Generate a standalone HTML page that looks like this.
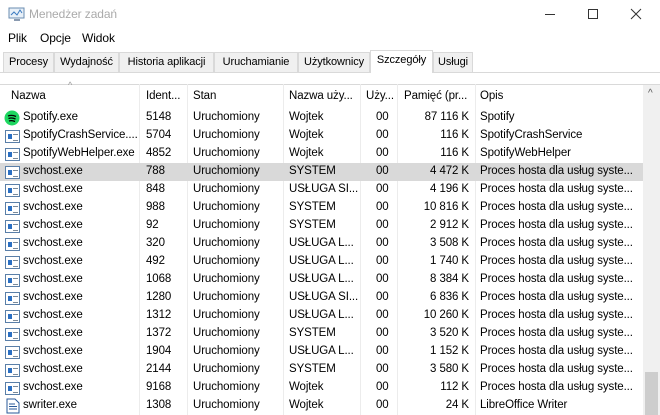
<!DOCTYPE html>
<html><head><meta charset="utf-8"><style>
*{margin:0;padding:0;box-sizing:border-box}
body{width:660px;height:415px;overflow:hidden;background:#fff;font-family:"Liberation Sans","DejaVu Sans",sans-serif;font-size:11.5px;color:#000;position:relative;letter-spacing:-0.1px}
.a{position:absolute;white-space:nowrap}
.tab{position:absolute;top:52px;height:20px;background:#f0f0f0;border:1px solid #d9d9d9;border-bottom:none;padding:3px 0 0 0;text-align:center;font-size:11px;overflow:hidden;white-space:nowrap}
.row{position:absolute;left:0;width:643px;height:18px}
.row span{position:absolute;top:2px;white-space:nowrap}
.sep{position:absolute;top:84px;width:1px;height:331px;background:#ececec}
.ic{position:absolute;left:5px;top:3px;width:15px;height:13px;border:1px solid #5a7fa8;background:#fff}
.ic:before{content:"";position:absolute;left:2px;top:3px;width:4px;height:5px;background:#2b6fc2}
.ic:after{content:"";position:absolute;left:7px;top:3px;width:5px;height:5px;border-top:1px solid #7a8a9a;border-bottom:1px solid #7a8a9a}
</style></head><body>
<svg class="a" style="left:8px;top:7px" width="18" height="16" viewBox="0 0 18 16"><rect x="1" y="1" width="15" height="10" fill="#e8f0f8" stroke="#6a8cb0"/><polyline points="3,8 6,5 9,8 12,3 14,6" fill="none" stroke="#3a7ac0"/><rect x="6" y="12" width="6" height="2" fill="#8a9ab0"/></svg>
<div class="a" style="left:29px;top:7px;color:#aaa;font-size:12px">Menedżer zadań</div>
<div class="a" style="left:545px;top:14px;width:10px;height:1px;background:#333"></div>
<div class="a" style="left:588px;top:9px;width:10px;height:10px;border:1px solid #333"></div>
<svg class="a" style="left:630px;top:8px" width="12" height="12"><path d="M1 1L11 11M11 1L1 11" stroke="#333" stroke-width="1"/></svg>
<div class="a" style="left:8px;top:31px;font-size:12px">Plik</div>
<div class="a" style="left:40px;top:31px;font-size:12px">Opcje</div>
<div class="a" style="left:82px;top:31px;font-size:12px">Widok</div>
<div class="a" style="left:0;top:72px;width:660px;height:1px;background:#d9d9d9"></div>
<div class="tab" style="left:3px;width:51px">Procesy</div>
<div class="tab" style="left:54px;width:65px">Wydajność</div>
<div class="tab" style="left:119px;width:95px">Historia aplikacji</div>
<div class="tab" style="left:214px;width:84px">Uruchamianie</div>
<div class="tab" style="left:298px;width:72px">Użytkownicy</div>
<div class="tab" style="left:370px;width:63px;top:50px;height:23px;background:#fff">Szczegóły</div>
<div class="tab" style="left:433px;width:40px">Usługi</div>
<div class="a" style="left:0;top:84px;width:660px;height:1px;background:#d9d9d9"></div>
<div class="a" style="left:68px;top:80px;color:#999;font-size:9px">^</div>
<div class="sep" style="left:139px"></div><div class="sep" style="left:187px"></div><div class="sep" style="left:283px"></div><div class="sep" style="left:360px"></div><div class="sep" style="left:397px"></div><div class="sep" style="left:475px"></div>
<div class="a" style="left:11px;top:90px">Nazwa</div>
<div class="a" style="left:146px;top:90px">Ident...</div>
<div class="a" style="left:193px;top:90px">Stan</div>
<div class="a" style="left:289px;top:90px">Nazwa uży...</div>
<div class="a" style="left:366px;top:90px">Uży...</div>
<div class="a" style="left:404px;top:90px">Pamięć (pr...</div>
<div class="a" style="left:480px;top:90px">Opis</div>
<div class="a" style="left:643px;top:85px;width:17px;height:330px;background:#f0f0f0"></div>
<div class="a" style="left:645px;top:372px;width:13px;height:43px;background:#cdcdcd"></div>
<div class="a" style="left:648px;top:88px;color:#555;font-size:10px">^</div>
<div id="rows"></div>
<script>
var d=[["Spotify.exe","5148","Wojtek","87 116 K","Spotify","sp"],
["SpotifyCrashService....","5704","Wojtek","116 K","SpotifyCrashService"],
["SpotifyWebHelper.exe","4852","Wojtek","116 K","SpotifyWebHelper"],
["svchost.exe","788","SYSTEM","4 472 K","h"],
["svchost.exe","848","USŁUGA SI...","4 196 K","h"],
["svchost.exe","988","SYSTEM","10 816 K","h"],
["svchost.exe","92","SYSTEM","2 912 K","h"],
["svchost.exe","320","USŁUGA L...","3 508 K","h"],
["svchost.exe","492","USŁUGA L...","1 740 K","h"],
["svchost.exe","1068","USŁUGA L...","8 384 K","h"],
["svchost.exe","1280","USŁUGA SI...","6 836 K","h"],
["svchost.exe","1312","USŁUGA L...","10 260 K","h"],
["svchost.exe","1372","SYSTEM","3 520 K","h"],
["svchost.exe","1904","USŁUGA L...","1 152 K","h"],
["svchost.exe","2144","SYSTEM","3 580 K","h"],
["svchost.exe","9168","Wojtek","112 K","h"],
["swriter.exe","1308","Wojtek","24 K","LibreOffice Writer","sw"]];
var h="";
d.forEach(function(r,i){
var t=109+i*18;
var ic=r[5]=="sp"?'<svg style="position:absolute;left:4px;top:1px" width="16" height="16"><circle cx="8" cy="8" r="7.5" fill="#1ed760"/><path d="M4 6Q8 4.5 12 6.5M4.5 8.5Q8 7.3 11.5 9M5 11Q8 10 11 11.5" stroke="#000" stroke-width="1.3" fill="none"/></svg>':r[5]=="sw"?'<svg style="position:absolute;left:6px;top:1px" width="14" height="16"><path d="M1 1H9L13 5V15H1Z" fill="#fff" stroke="#2a5a9a"/><path d="M3 6H9M3 8.5H11M3 11H11" stroke="#2a5a9a"/></svg>':'<i class="ic"></i>';
h+='<div class="row" style="top:'+t+'px;'+(i==3?'background:#d9d9d9':'')+'">'+ic+'<span style="left:23px">'+r[0]+'</span><span style="left:146px">'+r[1]+'</span><span style="left:193px">Uruchomiony</span><span style="left:289px">'+r[2]+'</span><span style="left:376px">00</span><span style="right:174px">'+r[3]+'</span><span style="left:480px">'+(r[4]=="h"?"Proces hosta dla usług syste...":r[4])+'</span></div>';
});
document.getElementById("rows").innerHTML=h;
</script>
</body></html>
